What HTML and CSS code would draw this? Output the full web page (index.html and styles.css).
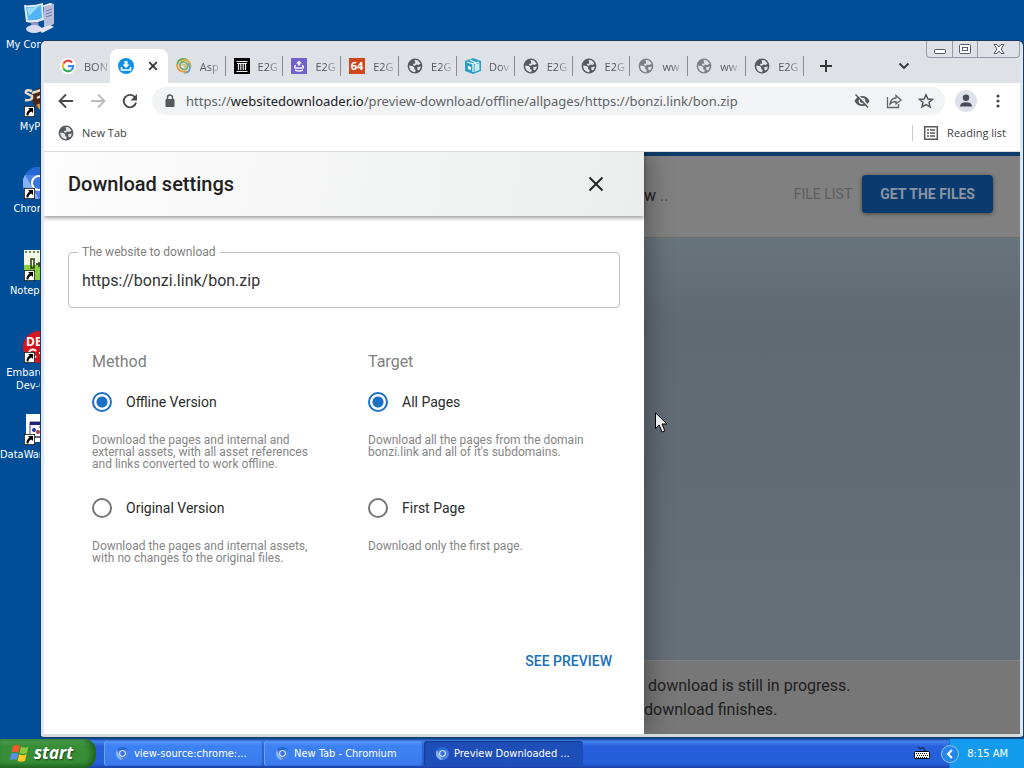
FILE: index.html
```
<!DOCTYPE html>
<html lang="en">
<head>
<meta charset="utf-8">
<title>Preview Downloaded - Chromium</title>
<link rel="stylesheet" href="styles.css">
</head>
<body>
<svg class="defs" aria-hidden="true">
  <symbol id="globe" viewBox="0 0 16 16"><circle cx="8" cy="8" r="7.4" fill="currentColor"/><path d="M2.2 7.6 5.6 8l1.8 1.6-.3 1.4 1.7 1-.6 2.2C4.700 14.400 2 11.600 2.200 7.600ZM7.400 2l3.200.3 3 3.200-2 1.500-2.100-.4-1.600 1.100-1.900-.5.300-1.400 2-.4-.2-1.400ZM10.200 9.200l3.700-.7-1 2.900-1.700 1.100-.9-1.300Z" fill="#e3e5e9"/></symbol>
  <symbol id="chromium" viewBox="0 0 32 32"><circle cx="16" cy="16" r="16" fill="#4a80ea"/><path d="M2 8A16 16 0 0 1 30 8H16Z" fill="#2766d5"/><path d="M2 8 9 20 16 32A16 16 0 0 1 2 8Z" fill="#86b2f6"/><circle cx="16" cy="16" r="8" fill="#fff"/><circle cx="16" cy="16" r="6" fill="#3674e5"/></symbol>
  <symbol id="shortcut" viewBox="0 0 11 11"><path d="M0 0h11v11H0z" fill="#fff" stroke="#000" stroke-width="1.500"/><path d="M4 2h5v5L7.400 5.400Q4.500 6.500 4.400 9.500H2.600Q2 6 5.600 3.600Z" fill="#000"/></symbol>
</svg>

<main class="desktop">
  <div class="shortcuts">
    <a class="shortcut" href="#">
      <span class="shortcut-icon"><svg viewBox="0 0 32 32"><path d="m21 4 10-3v20l-10 5Z" fill="#b9bddc"/><path d="m21 4-3-1 9-3 4 1Z" fill="#eceefa"/><path d="m23 8 6-2m-6 5 6-2m-6 5 6-2" stroke="#7379a8"/><path d="M1 2Q10 3 20 0l1 17Q12 21 3 19Z" fill="#e5e8f6"/><path d="M3 4q8 1 15-2l1 13q-7 3-14 2Z" fill="#4fb5f4"/><path d="M4 5q7 0 12-2L6 13Z" fill="#9cdcff"/><path d="M8 20l7-1 1 5-7 1Z" fill="#9298c4"/><ellipse cx="11" cy="26" rx="8" ry="4" fill="#d7daee"/><path d="m15 26 12-4 4 2-12 6Z" fill="#e2e4f3"/></svg></span>
      <span>My Computer</span>
    </a>
    <a class="shortcut" href="#">
      <span class="shortcut-icon"><svg viewBox="0 0 32 32"><circle cx="20" cy="13" r="11" fill="#4c2818"/><path d="M9 6q-7-2-6 2l6 3q1 5-7 4m7-7 9-3q4 1 2 5l-6 3" stroke="#ead9c0" stroke-width="2.500" fill="none"/><path d="m13 20 8-3 8 5-12 3Z" fill="#d99443"/></svg><svg class="arrow"><use href="#shortcut"/></svg></span>
      <span>MyPaint</span>
    </a>
    <a class="shortcut" href="#">
      <span class="shortcut-icon"><svg><use href="#chromium"/></svg><svg class="arrow"><use href="#shortcut"/></svg></span>
      <span>Chromium</span>
    </a>
    <a class="shortcut" href="#">
      <span class="shortcut-icon"><svg viewBox="0 0 32 32"><path d="M1 1h30v30H1Z" fill="#f1f7e3"/><path d="M1 16h30v15H1Z" fill="#8bcf3c"/><path d="M2 3h28" stroke="#76806a" stroke-width="2" stroke-dasharray="2 2"/><path d="M8 10h3v9H8Zm5 5h5m-2-2v5" stroke="#25391b" stroke-width="1.500" fill="none"/></svg><svg class="arrow"><use href="#shortcut"/></svg></span>
      <span>Notepad++</span>
    </a>
    <a class="shortcut" href="#">
      <span class="shortcut-icon"><svg viewBox="0 0 32 32"><circle cx="16" cy="16" r="16" fill="#d5161d"/><text x="3" y="15" class="dev-logo">DEV</text><path d="M13 20a4 4 0 1 0 0 5m3-3h7m-3.500-3.500v7" stroke="#fff" stroke-width="2" fill="none"/></svg><svg class="arrow"><use href="#shortcut"/></svg></span>
      <span>Embarcadero Dev-C++</span>
    </a>
    <a class="shortcut" href="#">
      <span class="shortcut-icon"><svg viewBox="0 0 32 32"><path d="M3 1h26v28H3Z" fill="#fff"/><path d="M7 9h20v15H7Z" fill="#fff" stroke="#46467a"/><path d="M7 9h20v3H7Z" fill="#202080"/><circle cx="11" cy="17" r="2" fill="#26329b"/><circle cx="15" cy="19" r="2" fill="#a63b37"/><path d="M16 14h9M4 24h24" stroke="#333"/></svg><svg class="arrow"><use href="#shortcut"/></svg></span>
      <span>DataWarehouse</span>
    </a>
  </div>

  <section class="window">
    <header class="tabstrip">
      <nav class="tabs">
        <a class="tab plain" href="#"><svg viewBox="0 0 16 16"><circle cx="8" cy="8" r="8" fill="#fff"/><g fill="none" stroke-width="2.200"><path d="M12 4.500A5.200 5.200 0 0 0 3.400 5.600" stroke="#ea4335"/><path d="M3.400 5.600a5.200 5.200 0 0 0 0 4.800" stroke="#fbbc05"/><path d="M3.400 10.400a5.200 5.200 0 0 0 8 1.600" stroke="#34a853"/><path d="M11.400 12A5 5 0 0 0 13.200 8.200H8" stroke="#4285f4"/></g></svg><span>BON</span></a>
        <div class="tab active"><svg viewBox="0 0 16 16"><circle cx="8" cy="8" r="8" fill="#1090ea"/><path d="M6.500 3h3v3.500h2L8 10 4.500 6.500h2Z" fill="#fff"/><path d="M3.500 9v3h9V9" stroke="#fff" stroke-width="1.500" fill="none"/></svg><button class="icon-button tab-close" aria-label="Close tab"><svg viewBox="0 0 16 16"><path d="m4.200 4.200 7.600 7.600m0-7.600-7.600 7.600" stroke="#333" stroke-width="1.800"/></svg></button></div>
        <a class="tab" href="#"><svg viewBox="0 0 16 16" fill="none" stroke-width="1.800"><path d="M1.500 7Q1 1.500 7 1q4 0 5 2.500" stroke="#56a35b"/><path d="M4 4q5-4 9 0 2 2 1.500 5" stroke="#dfb23e"/><path d="M12 5q3 4 1 8-2 2-5 1.500" stroke="#58a3c5"/><path d="M1 6q0 6 5 7.500 3 1 5-.5" stroke="#f09a35"/><path d="M4 7q0-3 4-3 4 1 3.500 5-1 3-4 2.500Q4 11 4 7Z" stroke="#7fae76"/><path d="M6 8q1-2 3-1 1 2-1 3" stroke="#e1b04f" stroke-width="1.200"/></svg><span>Asp</span></a>
        <a class="tab" href="#"><svg viewBox="0 0 16 16"><path d="M0 0h16v16H0Z" fill="#000"/><path d="M2.500 3.500h11M3 5.500h10M2.500 13.500h11M4.500 6v6m2.300-6v6m2.400-6v6m2.300-6v6" stroke="#eee" stroke-width="1.200"/></svg><span>E2G</span></a>
        <a class="tab" href="#"><svg viewBox="0 0 16 16"><path d="M0 0h16v16H0Z" fill="#7162c9"/><path d="m8 2.500 3 3H9.200v2H6.800v-2H5Z" fill="#f3f0ff"/><path d="M5 7.500Q3 8 4 10h8q1-2-1-2.500M4 12q4 2 8 0" stroke="#f3f0ff" stroke-width="1.500" fill="none"/></svg><span>E2G</span></a>
        <a class="tab" href="#"><svg viewBox="0 0 16 16"><path d="M0 0h16v16H0Z" fill="#cf471d"/><text x="8" y="12" class="badge-number">64</text></svg><span>E2G</span></a>
        <a class="tab" href="#"><svg class="globe"><use href="#globe"/></svg><span>E2G</span></a>
        <a class="tab" href="#"><svg viewBox="0 0 16 16"><path d="m0 3 8-3 8 3v10l-8 3-8-3Z" fill="#2b9fc3"/><path d="m2 4 6 2v8M8 6l6-2M5 2l6 3v4" stroke="#e5f7fb" stroke-width="1.300" fill="none"/><path d="m9.500 7 5-2v7l-5 2Z" fill="#c8eaf3"/><path d="m3 8 3 1v3l-3-1Z" fill="#fff"/></svg><span>Dov</span></a>
        <a class="tab" href="#"><svg class="globe"><use href="#globe"/></svg><span>E2G</span></a>
        <a class="tab" href="#"><svg class="globe"><use href="#globe"/></svg><span>E2G</span></a>
        <a class="tab" href="#"><svg class="globe faded"><use href="#globe"/></svg><span>ww</span></a>
        <a class="tab" href="#"><svg class="globe faded"><use href="#globe"/></svg><span>ww</span></a>
        <a class="tab" href="#"><svg class="globe"><use href="#globe"/></svg><span>E2G</span></a>
      </nav>
      <button class="icon-button new-tab" aria-label="New tab"><svg viewBox="0 0 16 16"><path d="M8 2v12M2 8h12" stroke="#333" stroke-width="1.900"/></svg></button>
      <button class="icon-button tab-search" aria-label="Search tabs"><svg viewBox="0 0 16 16"><path d="m3.500 5.500 4.500 4.500 4.500-4.500" stroke="#333" stroke-width="1.800" fill="none"/></svg></button>
      <div class="caption">
        <button aria-label="Minimize"><svg viewBox="0 0 14 14"><rect x="1.500" y="7.500" width="11" height="4" rx="1" fill="#fff" stroke="#555c68"/></svg></button>
        <button aria-label="Maximize"><svg viewBox="0 0 14 14"><rect x="1.500" y="2.500" width="11" height="9" rx="1" fill="#fff" stroke="#555c68"/><rect x="4.500" y="5.500" width="5" height="3" fill="#fff" stroke="#555c68"/></svg></button>
        <button class="caption-close" aria-label="Close"><svg viewBox="0 0 14 14"><path d="M2 2.500h3l2 2.500 2-2.500h3L9 7l3 4.500H9L7 9l-2 2.500H2L5 7Z" fill="#fff" stroke="#555c68"/></svg></button>
      </div>
    </header>

    <div class="toolbar">
      <button class="icon-button" aria-label="Back"><svg viewBox="0 0 16 16"><path d="M15 8H2m6-6.500L1.500 8 8 14.500" stroke="#46484b" stroke-width="1.800" fill="none"/></svg></button>
      <button class="icon-button" aria-label="Forward" disabled><svg viewBox="0 0 16 16"><path d="M1 8h13M8 1.500 14.500 8 8 14.500" stroke="#b9bbbe" stroke-width="1.800" fill="none"/></svg></button>
      <button class="icon-button" aria-label="Reload"><svg viewBox="0 0 16 16"><path d="M13 4.500A6.200 6.200 0 1 0 14 9.500" stroke="#46484b" stroke-width="1.900" fill="none"/><path d="M15 1v6.500H8.500Z" fill="#46484b"/></svg></button>
      <div class="omnibox">
        <svg class="lock" viewBox="0 0 16 16"><rect x="3.500" y="6" width="9" height="8" rx="1" fill="#55585c"/><path d="M5.500 6V4.500a2.500 2.500 0 0 1 5 0V6" stroke="#55585c" stroke-width="1.500" fill="none"/></svg>
        <a class="url" href="#">https://<b>websitedownloader.io</b>/preview-download/offline/allpages/https://bonzi.link/bon.zip</a>
        <button class="icon-button" aria-label="Third-party cookies blocked"><svg viewBox="0 0 16 16"><path d="M.5 8Q3 3 8 3t7.500 5Q13 13 8 13T.5 8Z" fill="#55585c"/><circle cx="8" cy="8" r="3.300" fill="#f1f3f4"/><circle cx="8" cy="8" r="2" fill="#55585c"/><path d="m2.700 1 12 12" stroke="#f1f3f4" stroke-width="1.500"/><path d="m1.500 1.500 12.500 13" stroke="#55585c" stroke-width="1.500"/></svg></button>
        <button class="icon-button" aria-label="Share"><svg viewBox="0 0 16 16" fill="none" stroke="#606368" stroke-width="1.300"><path d="M1.500 4v10.500h11V11"/><path d="M4 11q.5-5.500 6-6V2.500L15 7l-5 4V8.500Q6 8.500 4 11Z"/></svg></button>
        <button class="icon-button" aria-label="Bookmark this tab"><svg viewBox="0 0 16 16"><path d="m8 1.800 1.900 4.200 4.600.4-3.500 3 1.100 4.500L8 11.500l-4.100 2.400L5 9.400l-3.500-3L6.100 6Z" fill="none" stroke="#55585c" stroke-width="1.500"/></svg></button>
      </div>
      <button class="icon-button avatar" aria-label="Profile"><svg viewBox="0 0 16 16"><circle cx="8" cy="4.800" r="3.200" fill="#4a4c5b"/><path d="M2 13.500q0-4.300 6-4.300t6 4.300Z" fill="#4a4c5b"/></svg></button>
      <button class="icon-button" aria-label="Menu"><svg viewBox="0 0 16 16" fill="#46484b"><circle cx="8" cy="3" r="1.600"/><circle cx="8" cy="8" r="1.600"/><circle cx="8" cy="13" r="1.600"/></svg></button>
    </div>

    <div class="bookmarks">
      <a class="bookmark" href="#"><svg class="globe"><use href="#globe"/></svg>New Tab</a>
      <button class="bookmark reading"><svg viewBox="0 0 16 16"><path d="M1.700 1.700h12.600v12.600H1.700Z" fill="none" stroke="#55585c" stroke-width="1.500"/><path d="M4 5h2m1 0h5M4 8h2m1 0h5m-8 3h2m1 0h5" stroke="#55585c" stroke-width="1.500"/></svg>Reading list</button>
    </div>

    <div class="page">
      <aside class="drawer">
        <header class="drawer-head">
          <h1>Download settings</h1>
          <button class="icon-button drawer-close" aria-label="Close settings"><svg viewBox="0 0 16 16"><path d="m1.500 1.500 13 13m0-13-13 13" stroke="#222" stroke-width="1.900"/></svg></button>
        </header>
        <form class="settings">
          <div class="field">
            <label for="site">The website to download</label>
            <input id="site" type="text" value="https://bonzi.link/bon.zip">
          </div>
          <div class="options">
            <section role="radiogroup" aria-labelledby="method">
              <h2 id="method">Method</h2>
              <label class="choice"><input type="radio" name="method" checked>Offline Version</label>
              <p>Download the pages and internal and external assets, with all asset references and links converted to work offline.</p>
              <label class="choice"><input type="radio" name="method">Original Version</label>
              <p>Download the pages and internal assets, with no changes to the original files.</p>
            </section>
            <section role="radiogroup" aria-labelledby="target">
              <h2 id="target">Target</h2>
              <label class="choice"><input type="radio" name="target" checked>All Pages</label>
              <p>Download all the pages from the domain bonzi.link and all of it's subdomains.</p>
              <label class="choice"><input type="radio" name="target">First Page</label>
              <p>Download only the first page.</p>
            </section>
          </div>
          <button type="button" class="preview-button">SEE PREVIEW</button>
        </form>
      </aside>
      <div class="backdrop">
        <header class="site-head">
          <span class="site-title">w <i>..</i></span>
          <a class="file-list" href="#">FILE LIST</a>
          <button class="get-files">GET THE FILES</button>
        </header>
        <div class="site-body"></div>
        <footer class="site-foot">
          <p class="lead">download is still in progress.</p>
          <p>download finishes.</p>
        </footer>
      </div>
    </div>
  </section>

  <svg class="cursor" viewBox="0 0 13 21"><path d="M.5.800v15.700l3.700-3.500 2.900 7 2.700-1.200L7 12h5Z" fill="#fff" stroke="#000"/></svg>
</main>

<footer class="taskbar">
  <button class="start"><svg viewBox="0 0 20 20"><path d="M3 3q4-2 7 0L8.500 9.500Q5 8 1.500 9.500Z" fill="#ee5a2b"/><path d="M11 3.500q4 2 7.500 0L17 10q-4 2-7.500 0Z" fill="#88c83a"/><path d="M1.200 10.800q3.500-1.500 7 0L6.500 17q-3-1.500-6.500 0Z" fill="#5d8df0"/><path d="M9.200 11.300q3.500 2 7.500 0L15 17.700q-4 2-7.500 0Z" fill="#fbc928"/></svg>start</button>
  <div class="tasks">
    <button class="task"><svg><use href="#chromium"/></svg>view-source:chrome:...</button>
    <button class="task"><svg><use href="#chromium"/></svg>New Tab - Chromium</button>
    <button class="task pressed"><svg><use href="#chromium"/></svg>Preview Downloaded ...</button>
  </div>
  <svg class="keyboard" viewBox="0 0 16 16"><path d="M4 2q3 3 4 1t3 2v2" stroke="#111" fill="none"/><rect x=".5" y="6.500" width="15" height="7" rx="1" fill="#fff" stroke="#000"/><path d="M2 8.500h12M3 10.500h11M2 12.500h12" stroke="#111" stroke-dasharray="1 1"/></svg>
  <div class="tray">
    <button class="tray-toggle" aria-label="Show hidden icons"><svg viewBox="0 0 18 18"><circle cx="9" cy="9" r="8.500" fill="#2386e8" stroke="#8cc8fa"/><path d="M11 5 7 9l4 4" stroke="#fff" stroke-width="2" fill="none"/></svg></button>
    <time>8:15 AM</time>
  </div>
</footer>
</body>
</html>
```
FILE: styles.css
```
* { box-sizing: border-box; }

body {
  margin: 0;
  height: 100vh;
  display: flex;
  flex-direction: column;
  overflow: hidden;
  background: #004e98;
  font-family: "DejaVu Sans Condensed", "Open Sans", sans-serif;
  font-size: 11px;
}

button { font: inherit; border: 0; padding: 0; background: none; color: inherit; }
a { color: inherit; text-decoration: none; }
svg { flex: none; display: block; }
h1, h2, p { margin: 0; font-weight: 400; }
.defs { position: absolute; width: 0; height: 0; }

/* Desktop */
.desktop { position: relative; flex: 1; min-height: 0; }
.shortcuts {
  display: grid;
  grid-auto-rows: 82px;
  width: 76px;
  padding-top: 3px;
}
.shortcut {
  display: flex;
  flex-direction: column;
  align-items: center;
  gap: 3px;
  color: #fff;
  line-height: 13px;
  text-align: center;
}
.shortcut-icon { position: relative; width: 32px; height: 32px; }
.shortcut-icon svg { width: 32px; height: 32px; }
.shortcut-icon .arrow { position: absolute; left: 1px; bottom: 0; width: 11px; height: 11px; }
.dev-logo { font: 700 12px "Open Sans", sans-serif; fill: #fff; }

.cursor { position: absolute; left: 655px; top: 412px; width: 13px; height: 21px; }

/* Browser window */
.window {
  position: absolute;
  inset: 41px 1px 2px 41px;
  display: flex;
  flex-direction: column;
  border: solid #dbe7f5;
  border-width: 0 3px 3px;
  border-bottom-color: #d5dbda;
  border-radius: 5px 5px 3px 3px;
  box-shadow: 0 0 0 1px #1b3b63;
  background: #fff;
  font-family: "Open Sans", sans-serif;
}
.tabstrip {
  display: flex;
  align-items: flex-start;
  height: 42px;
  padding-left: 8px;
  background: #dee1e6;
}
.tabs { display: flex; flex: 0 1 752px; min-width: 0; padding-top: 8px; }
.tab {
  position: relative;
  display: flex;
  align-items: center;
  gap: 8px;
  flex: 1 1 0;
  min-width: 0;
  height: 34px;
  padding: 0 2px 0 8px;
  color: #55585c;
}
.tab svg { width: 16px; height: 16px; }
.tab span { white-space: nowrap; mask-image: linear-gradient(90deg, #000 50%, #0004); }
.tab:not(.plain, .active)::after {
  content: "";
  position: absolute;
  right: 0;
  top: 7px;
  width: 1px;
  height: 20px;
  background: #888b90;
}
.tab.active { background: #fff; border-radius: 8px 8px 0 0; gap: 11px; }
.globe { width: 16px; height: 16px; color: #55585c; }
.faded { opacity: 0.7; }
.badge-number { font: 700 11px "Open Sans", sans-serif; fill: #fff; text-anchor: middle; }

.icon-button { display: grid; place-items: center; flex: none; width: 16px; height: 16px; }
.icon-button svg { width: 16px; height: 16px; }
.new-tab { margin: 17px 0 0 14px; }
.tab-search { margin: 17px 14px 0 auto; }
.caption {
  display: flex;
  height: 17px;
  border: 1px solid #959ba7;
  border-top: 0;
  border-radius: 0 0 4px 4px;
}
.caption button { display: grid; place-items: center; width: 25px; }
.caption button + button { border-left: 1px solid #959ba7; }
.caption svg { width: 14px; height: 14px; }
.caption .caption-close { width: 42px; }

.toolbar { display: flex; align-items: center; gap: 16px; height: 36px; padding: 0 14px; }
.omnibox {
  display: flex;
  align-items: center;
  gap: 16px;
  flex: 1;
  min-width: 0;
  height: 28px;
  margin: 0 -6px 0 -2px;
  padding: 0 11px 0 10px;
  border-radius: 14px;
  background: #f1f3f4;
}
.lock { width: 16px; height: 16px; }
.url {
  flex: 1;
  min-width: 0;
  margin-left: -8px;
  overflow: hidden;
  white-space: nowrap;
  color: #5f6368;
  font-family: "Noto Sans", sans-serif;
  font-size: 13px;
}
.url b { font-weight: 400; color: #202124; }
.avatar { width: 22px; height: 22px; margin-right: -3px; border-radius: 50%; background: #dfe1ea; }

.bookmarks {
  display: flex;
  align-items: center;
  justify-content: space-between;
  height: 33px;
  padding: 0 14px 5px;
  border-bottom: 1px solid #dadce0;
  color: #3c4043;
}
.bookmark { display: flex; align-items: center; gap: 8px; }
.bookmark svg { width: 16px; height: 16px; }
.reading { height: 16px; padding-left: 10px; border-left: 1px solid #c8cacd; }

/* Page */
.page { display: flex; flex: 1; min-height: 0; font-family: Roboto, sans-serif; }
.drawer {
  z-index: 1;
  flex: 0 0 600px;
  display: flex;
  flex-direction: column;
  background: #fff;
  box-shadow: 4px 0 24px #0005;
  clip-path: inset(0 -40px 0 0);
}
.drawer-head {
  display: flex;
  align-items: center;
  justify-content: space-between;
  height: 64px;
  padding: 0 40px 0 24px;
  background: linear-gradient(100deg, #fdfdfd, #eceded);
  box-shadow: 0 2px 4px #0006;
}
.drawer-head h1 { font-size: 20px; font-weight: 500; color: #212121; }
.settings { display: flex; flex-direction: column; padding: 36px 24px 0; }
.field { position: relative; }
.field label {
  position: absolute;
  left: 10px;
  top: -8px;
  padding: 0 4px;
  background: #fff;
  color: #808080;
  font-size: 12px;
  line-height: 16px;
}
.field input {
  display: block;
  width: 100%;
  height: 56px;
  padding: 0 13px;
  border: 1px solid #bdbdbd;
  border-radius: 4px;
  background: #fff;
  color: #333;
  font: 16px Roboto, sans-serif;
}
.options { display: grid; grid-template-columns: 1fr 1fr; padding-top: 42px; }
.options section { min-width: 0; padding: 0 24px; }
.options h2 { font-size: 16px; line-height: 24px; color: #808080; }
.choice {
  display: flex;
  align-items: center;
  gap: 14px;
  height: 40px;
  margin-top: 8px;
  color: #2b2b2b;
  font-size: 14px;
}
.choice input {
  appearance: none;
  width: 20px;
  height: 20px;
  margin: 0;
  border: 2px solid #757575;
  border-radius: 50%;
}
.choice input:checked {
  border-color: #1a6fc9;
  background: radial-gradient(circle, #1a6fc9 5px, #fff 6px);
}
.options p {
  min-height: 36px;
  margin-top: 12px;
  color: #868686;
  font-size: 12px;
  line-height: 12px;
}
.options p + .choice { margin-top: 18px; }
.preview-button {
  align-self: flex-end;
  height: 36px;
  margin-top: 67px;
  padding: 0 8px;
  color: #1a6fb8;
  font-size: 14px;
  font-weight: 500;
}

.backdrop {
  flex: 1;
  min-width: 0;
  display: flex;
  flex-direction: column;
  background: #777;
  color: #202020;
  font-size: 16px;
}
.site-head {
  display: flex;
  align-items: center;
  gap: 10px;
  height: 86px;
  padding: 0 27px 6px 0;
  border-top: 4px solid #0d3b69;
  border-bottom: 1px solid #6d6d6d;
  background: #808080;
}
.site-title { flex: 1; padding-top: 4px; }
.site-title i { font-style: normal; color: #505050; }
.file-list { color: #5e5e5e; font-size: 14px; }
.get-files {
  height: 38px;
  padding: 0 18px;
  border-radius: 4px;
  background: #0b3a6f;
  box-shadow: 0 1px 4px #0007;
  color: #8795a3;
  font-size: 14px;
  font-weight: 700;
}
.site-body { flex: 1; background: linear-gradient(#68747c, #616973 20%, #666e78); }
.site-foot {
  height: 74px;
  padding-top: 13px;
  border-top: 1px solid #828282;
  background: #777;
  line-height: 24px;
  white-space: nowrap;
}
.site-foot .lead { padding-left: 4px; }

/* Taskbar */
.taskbar {
  display: flex;
  align-items: stretch;
  height: 29px;
  background: linear-gradient(#1c489e, #4484ee 8%, #2860dc 25%, #245edb 85%, #1941a5);
  color: #fff;
}
.start {
  display: flex;
  align-items: center;
  gap: 4px;
  width: 96px;
  padding: 0 0 2px 10px;
  border-radius: 0 12px 12px 0;
  background: linear-gradient(#5aa85a, #388e38 25%, #378f37 80%, #236e23);
  box-shadow: inset -4px 0 6px #1d601d;
  font: italic 700 17px "Open Sans", sans-serif;
  text-shadow: 1px 1px 2px #0008;
}
.start svg { width: 20px; height: 20px; }
.tasks { display: flex; flex: 1; min-width: 0; gap: 1px; padding: 2px 0 2px 8px; }
.task {
  display: flex;
  align-items: center;
  gap: 5px;
  flex: 0 1 159px;
  min-width: 0;
  padding: 0 12px;
  border-radius: 3px;
  background: linear-gradient(#5a96fa, #3c81f3 20%, #3b7cee);
  box-shadow: inset 1px 0 1px #6ea3f8, inset -1px -1px 1px #2e62c9;
  white-space: nowrap;
}
.task svg { width: 13px; height: 13px; }
.task.pressed { background: #1e4fb8; box-shadow: inset 1px 1px 2px #153a8c; }
.keyboard { width: 16px; height: 16px; margin: 6px 11px 0 0; }
.tray {
  display: flex;
  align-items: center;
  gap: 8px;
  padding-right: 16px;
  background: linear-gradient(90deg, transparent 8px, #0b4fae 8px, #159aee 9px, #129bea);
}
.tray-toggle svg { width: 18px; height: 18px; }
```
